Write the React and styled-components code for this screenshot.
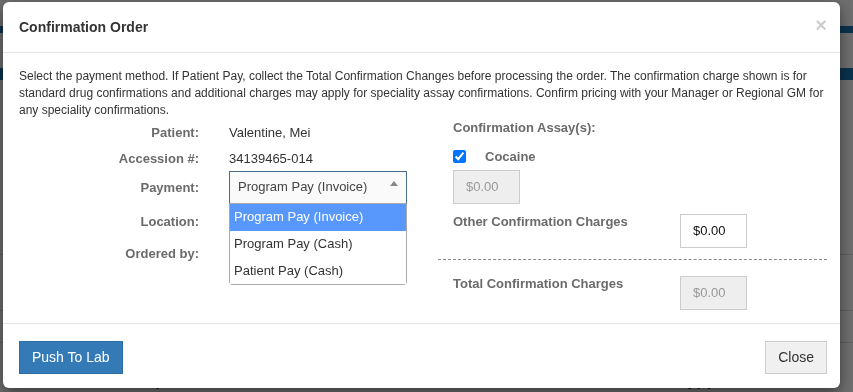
import React from 'react'
import styled, { createGlobalStyle } from 'styled-components'

const GlobalStyle = createGlobalStyle`
  html, body {
    margin: 0;
    padding: 0;
    width: 853px;
    height: 392px;
    overflow: hidden;
    background: #fff;
    font-family: "Liberation Sans", Arial, sans-serif;
    color: #333;
  }
  * { box-sizing: border-box; }
`

// ---- page behind the dialog ----
const Page = styled.div`
  width: 853px;
  height: 392px;
  display: flex;
  flex-direction: column;
  background: #fff;
`

const Band = styled.div`
  height: ${(p) => p.h}px;
  flex: none;
  background: ${(p) => p.bg || '#fff'};
  border-bottom: ${(p) => (p.line ? '1px solid #ddd' : 'none')};
`

const TableHead = styled.div`
  display: flex;
  padding: 22px 0 0 20px;
  font-size: 14px;
  font-weight: bold;
  color: #333;
`

const HeadCell = styled.div`
  width: ${(p) => p.w}px;
  flex: none;
`

// ---- modal ----
const Backdrop = styled.div`
  position: fixed;
  inset: 0;
  background: rgba(0, 0, 0, 0.56);
`

const Dialog = styled.div`
  position: absolute;
  left: 3px;
  top: 2px;
  width: 837px;
  height: 386px;
  background: #fff;
  border-radius: 6px;
  box-shadow: 0 5px 15px rgba(0, 0, 0, 0.5);
  display: flex;
  flex-direction: column;
`

const Header = styled.div`
  height: 51px;
  padding: 0 13px 0 16px;
  display: flex;
  align-items: center;
  justify-content: space-between;
  border-bottom: 1px solid #e5e5e5;
`

const Title = styled.h4`
  margin: 0;
  font-size: 14px;
  font-weight: bold;
  color: #333;
`

const CloseX = styled.span`
  font-size: 20px;
  font-weight: bold;
  color: #000;
  opacity: 0.2;
  line-height: 1;
  margin-top: -4px;
`

const Body = styled.div`
  flex: 1;
  padding: 15px 13px 0 16px;
`

const Intro = styled.p`
  margin: 0;
  font-size: 12px;
  line-height: 17px;
  color: #333;
`

const Columns = styled.div`
  display: grid;
  grid-template-columns: 419px 1fr;
`

const LeftCol = styled.div`
  display: flex;
  flex-direction: column;
`

const FieldRow = styled.div`
  display: flex;
  align-items: center;
  height: ${(p) => p.h}px;
  position: relative;
`

const Label = styled.div`
  width: 180px;
  flex: none;
  text-align: right;
  font-size: 13px;
  font-weight: bold;
  color: #6b6b6b;
  margin-right: 30px;
`

const Value = styled.div`
  font-size: 13px;
  color: #333;
`

const SelectWrap = styled.div`
  position: relative;
  width: 178px;
  height: 33px;
`

const SelectBox = styled.div`
  height: 33px;
  border: 1px solid #4a6d8f;
  border-bottom-color: #aaa;
  background: #fafafa;
  display: flex;
  align-items: center;
  justify-content: space-between;
  padding: 0 8px 2px 8px;
  font-size: 13px;
  color: #444;
`

const Caret = styled.span`
  width: 0;
  height: 0;
  border-left: 4px solid transparent;
  border-right: 4px solid transparent;
  border-bottom: 5px solid #888;
  margin-top: -6px;
`

const Menu = styled.ul`
  position: absolute;
  left: 0;
  top: 33px;
  width: 178px;
  margin: 0;
  padding: 0;
  list-style: none;
  background: #fff;
  border: 1px solid #aaa;
  border-top: none;
  border-radius: 0 0 4px 4px;
  z-index: 2;
`

const Option = styled.li`
  height: ${(p) => (p.last ? 26 : 27)}px;
  display: flex;
  align-items: center;
  padding: 0 4px 2px;
  font-size: 13px;
  color: ${(p) => (p.active ? '#fff' : '#333')};
  background: ${(p) => (p.active ? '#5897fb' : '#fff')};
`

const RightCol = styled.div`
  display: flex;
  flex-direction: column;
`

const RightInner = styled.div`
  padding-left: 15px;
  display: flex;
  flex-direction: column;
`

const SectionLabel = styled.div`
  font-size: 13px;
  font-weight: bold;
  color: #6b6b6b;
  line-height: 18px;
`

const CheckRow = styled.label`
  display: flex;
  align-items: center;
  height: 20px;
  margin-top: 9px;
  font-size: 13px;
  font-weight: bold;
  color: #6b6b6b;
`

const Check = styled.input`
  width: 13px;
  height: 13px;
  margin: 0 19px 0 0;
  accent-color: #0075ff;
`

const Money = styled.div`
  width: 67px;
  height: 34px;
  flex: none;
  border: 1px solid #ccc;
  background: ${(p) => (p.disabled ? '#eee' : '#fff')};
  color: ${(p) => (p.disabled ? '#999' : '#111')};
  font-size: 13px;
  display: flex;
  align-items: center;
  padding: 0 12px 1px;
  margin-top: ${(p) => p.mt || 0}px;
`

const ChargeRow = styled.div`
  display: flex;
  align-items: flex-start;
  margin-top: ${(p) => p.mt}px;
`

const ChargeLabel = styled.div`
  width: 227px;
  flex: none;
  font-size: 13px;
  font-weight: bold;
  color: #6b6b6b;
  line-height: 16px;
`

const Dashed = styled.hr`
  margin: 11px 0 0 0;
  border: none;
  border-top: 1px dashed #888;
  height: 0;
`

const Footer = styled.div`
  height: 65px;
  border-top: 1px solid #e5e5e5;
  padding: 0 13px 0 16px;
  display: flex;
  align-items: center;
  justify-content: space-between;
`

const Button = styled.button`
  height: 33px;
  padding: 0 12px 1px;
  font-family: inherit;
  font-size: 14px;
  border: 1px solid ${(p) => (p.primary ? '#2e6da4' : '#ccc')};
  background: ${(p) => (p.primary ? '#337ab7' : '#f0f0f0')};
  color: ${(p) => (p.primary ? '#fff' : '#333')};
  margin-top: 2px;
`

const heads = [
  ['Date', 102],
  ['Group #', 106],
  ['Accession #', 102],
  ['Order', 110],
  ['Result', 58],
  ['Status', 99],
  ['Positive Assay(s)', 130],
  ['Note', 80],
]

export default function App() {
  return (
    <>
      <GlobalStyle />
      <Page>
        <Band h={26} />
        <Band h={7} bg="#1b75b5" />
        <Band h={35} />
        <Band h={12} bg="#1b75b5" />
        <Band h={175} line />
        <Band h={56} line />
        <Band h={32} line />
        <Band h={8} />
        <TableHead>
          {heads.map(([t, w]) => (
            <HeadCell key={t} w={w}>{t}</HeadCell>
          ))}
        </TableHead>
      </Page>
      <Backdrop />
      <Dialog>
        <Header>
          <Title>Confirmation Order</Title>
          <CloseX>×</CloseX>
        </Header>
        <Body>
          <Intro>
            Select the payment method. If Patient Pay, collect the Total Confirmation Changes before
            processing the order. The confirmation charge shown is for standard drug confirmations and
            additional charges may apply for speciality assay confirmations. Confirm pricing with your
            Manager or Regional GM for any speciality confirmations.
          </Intro>
          <Columns>
            <LeftCol>
              <FieldRow h={26}>
                <Label>Patient:</Label>
                <Value>Valentine, Mei</Value>
              </FieldRow>
              <FieldRow h={26}>
                <Label>Accession #:</Label>
                <Value>34139465-014</Value>
              </FieldRow>
              <FieldRow h={33}>
                <Label>Payment:</Label>
                <SelectWrap>
                  <SelectBox>
                    <span>Program Pay (Invoice)</span>
                    <Caret />
                  </SelectBox>
                  <Menu>
                    <Option active>Program Pay (Invoice)</Option>
                    <Option>Program Pay (Cash)</Option>
                    <Option last>Patient Pay (Cash)</Option>
                  </Menu>
                </SelectWrap>
              </FieldRow>
              <FieldRow h={34}>
                <Label>Location:</Label>
              </FieldRow>
              <FieldRow h={30}>
                <Label>Ordered by:</Label>
              </FieldRow>
            </LeftCol>
            <RightCol>
              <RightInner>
                <SectionLabel>Confirmation Assay(s):</SectionLabel>
                <CheckRow>
                  <Check type="checkbox" defaultChecked />
                  Cocaine
                </CheckRow>
                <Money disabled mt={4}>$0.00</Money>
                <ChargeRow mt={10}>
                  <ChargeLabel>Other Confirmation Charges</ChargeLabel>
                  <Money>$0.00</Money>
                </ChargeRow>
              </RightInner>
              <Dashed />
              <RightInner>
                <ChargeRow mt={16}>
                  <ChargeLabel>Total Confirmation Charges</ChargeLabel>
                  <Money disabled>$0.00</Money>
                </ChargeRow>
              </RightInner>
            </RightCol>
          </Columns>
        </Body>
        <Footer>
          <Button primary>Push To Lab</Button>
          <Button>Close</Button>
        </Footer>
      </Dialog>
    </>
  )
}
